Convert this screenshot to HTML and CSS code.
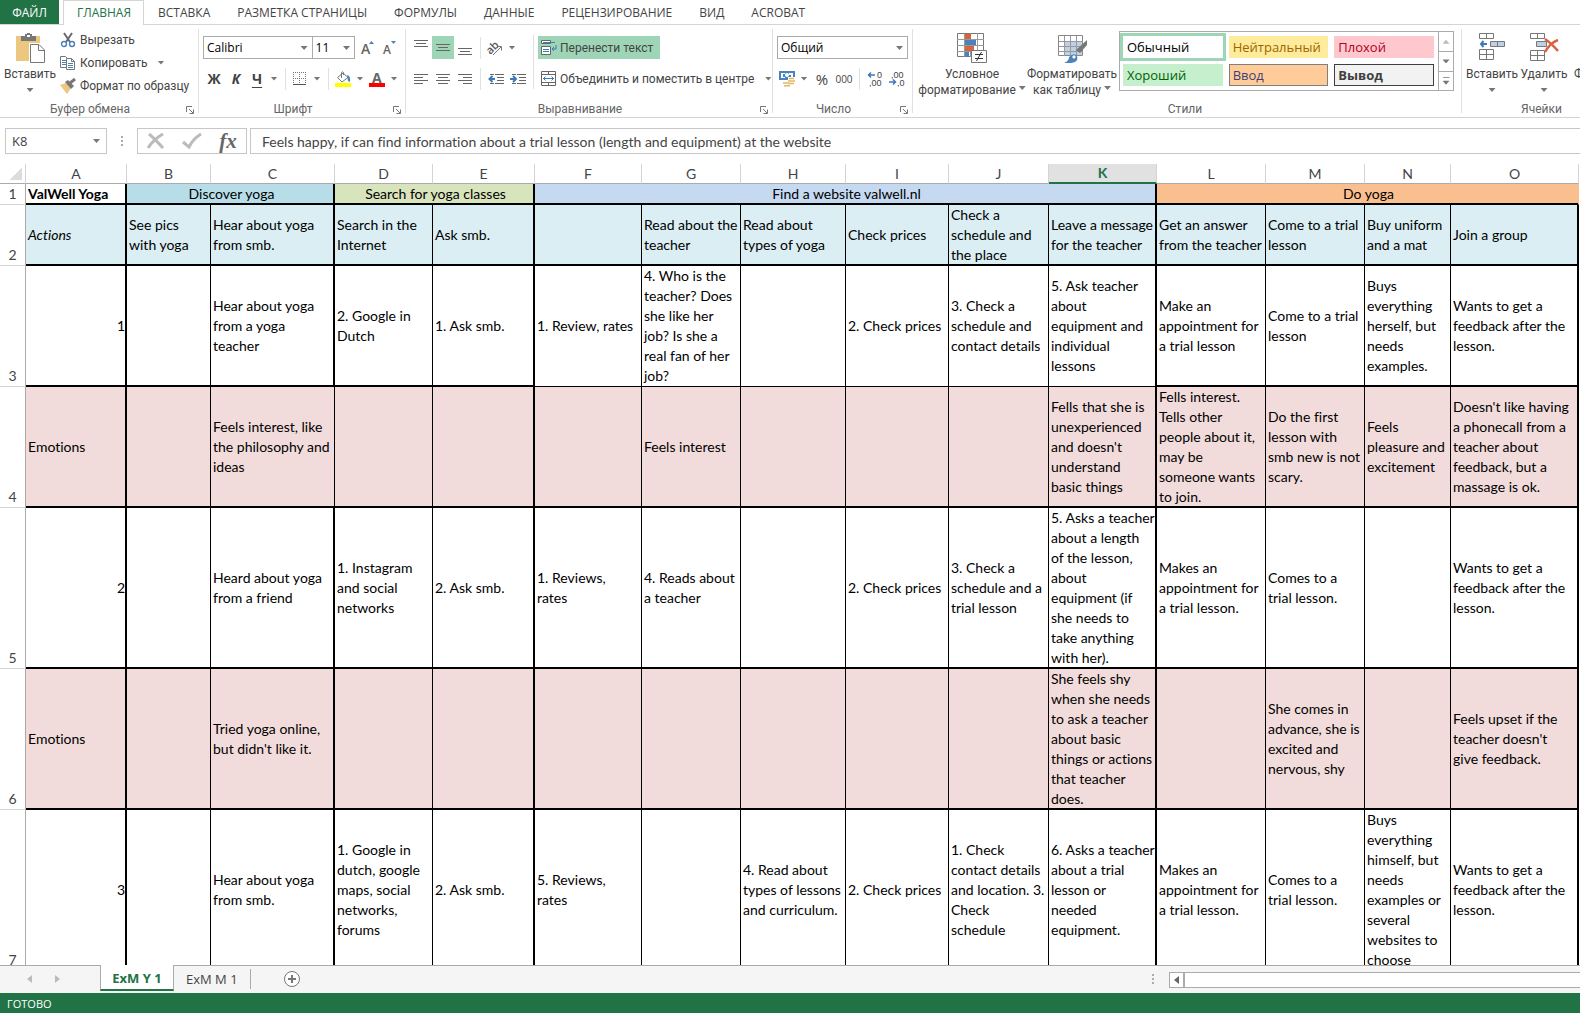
FILE: index.html
```html
<!DOCTYPE html>
<html lang="ru">
<head>
<meta charset="utf-8">
<title>ValWell Yoga - Excel</title>
<link rel="stylesheet" href="styles.css">
</head>
<body>
<nav class="tabs">
  <a class="tab tab-file" href="#file">ФАЙЛ</a>
  <a class="tab tab-active" href="#home">ГЛАВНАЯ</a>
  <a class="tab" href="#insert">ВСТАВКА</a>
  <a class="tab" href="#layout">РАЗМЕТКА СТРАНИЦЫ</a>
  <a class="tab" href="#formulas">ФОРМУЛЫ</a>
  <a class="tab" href="#data">ДАННЫЕ</a>
  <a class="tab" href="#review">РЕЦЕНЗИРОВАНИЕ</a>
  <a class="tab" href="#view">ВИД</a>
  <a class="tab" href="#acrobat">ACROBAT</a>
</nav>

<div class="ribbon">
  <section class="group group-clipboard">
    <div class="group-body">
      <button class="big big-paste" type="button">
        <svg width="30" height="30"><rect x="1" y="3" width="24" height="25" fill="#ebc77f"/><path d="M6 3h4V1h2V0h3v1h2v2h4v5H6z" fill="#777"/><rect x="12" y="2" width="3" height="2" fill="#fff"/><path d="M14 10h11l5 6v14H14z" fill="#fff"/><path d="M15.500 11.500h8.500l5.500 5.500v12.500h-14zM23.500 11.500v6h6" fill="#fff" stroke="#777"/></svg>
        <span>Вставить</span><i class="caret"></i>
      </button>
      <div class="clip-list">
        <button class="line-btn" type="button"><svg width="16" height="16"><path d="M4 1l6 9M12 1L6 10" stroke="#6a6a6a" stroke-width="2" fill="none"/><circle cx="4" cy="12" r="2.500" fill="none" stroke="#4a82bd" stroke-width="1.400"/><circle cx="12" cy="12" r="2.500" fill="none" stroke="#4a82bd" stroke-width="1.400"/></svg><span>Вырезать</span></button>
        <button class="line-btn" type="button"><svg width="16" height="16"><path d="M.5 1.500h5l3 3v8h-8z" fill="#fff" stroke="#777"/><path d="M2 5.500h4M2 7.500h4M2 9.500h4" stroke="#4a82bd"/><path d="M6.500 3.500h5l3 3v8h-8z" fill="#fff" stroke="#777"/><path d="M11.500 3.500v3h3" fill="none" stroke="#777"/><path d="M8 8.500h5M8 10.500h5M8 12.500h5" stroke="#4a82bd"/></svg><span>Копировать</span><i class="caret"></i></button>
        <button class="line-btn" type="button"><svg width="16" height="16"><path d="M0 7l6-2 5 5-4 6z" fill="#ebc77f"/><path d="M5 4l3-2 6 6-3 3z" fill="#777"/><path d="M10 5l5-4" stroke="#777" stroke-width="3"/></svg><span>Формат по образцу</span></button>
      </div>
    </div>
    <div class="group-title">Буфер обмена<svg class="launcher" width="8" height="8"><path d="M.5 6V.5H6M3 3l4 4M7.500 3.500v4h-4" fill="none" stroke="#777"/></svg></div>
  </section>

  <section class="group group-font">
    <div class="group-body rows">
      <div class="row">
        <label class="combo combo-font"><select aria-label="Шрифт"><option>Calibri</option></select></label>
        <label class="combo combo-size"><select aria-label="Размер шрифта"><option>11</option></select></label>
        <button class="tool grow" type="button" aria-label="Увеличить"><svg width="16" height="16"><text x="1" y="14" class="glyph-lg">A</text><path d="M9 4l2.500-3L14 4z" fill="#4a82bd"/></svg></button>
        <button class="tool" type="button" aria-label="Уменьшить"><svg width="16" height="16"><text x="1" y="14" class="glyph-sm">A</text><path d="M9 1l2.500 3L14 1z" fill="#4a82bd"/></svg></button>
      </div>
      <div class="row">
        <button class="tool bold" type="button">Ж</button>
        <button class="tool bold ital" type="button">К</button>
        <button class="tool tool-sm bold under" type="button">Ч</button>
        <button class="drop" type="button" aria-label="Подчеркивание"><i class="caret"></i></button>
        <span class="sep"></span>
        <button class="tool tool-sm" type="button" aria-label="Границы"><svg width="14" height="14"><path d="M.5 0v12M12.500 0v12M6.500 0v12M0 .5h13M0 6.500h13" stroke="#777" stroke-dasharray="1 1"/><path d="M0 12.500h13" stroke="#555"/></svg></button>
        <button class="drop" type="button" aria-label="Вид границ"><i class="caret"></i></button>
        <span class="sep"></span>
        <button class="tool tool-sm" type="button" aria-label="Заливка"><svg width="16" height="16"><path d="M2.500 6.500L8 2l5 4.500L7 11z" fill="#fff" stroke="#777"/><path d="M6.500 7V1.500Q7.500 0 8.500 1.500V4" fill="none" stroke="#777"/><path d="M12 4q4 1 3 7l-2-1z" fill="#4a82bd"/><path d="M0 12h16v4H0z" fill="#ff0"/></svg></button>
        <button class="drop" type="button" aria-label="Цвет заливки"><i class="caret"></i></button>
        <button class="tool tool-sm" type="button" aria-label="Цвет текста"><svg width="16" height="16"><text x="3" y="12" class="glyph-bold">A</text><path d="M0 12h16v4H0z" fill="#f00"/></svg></button>
        <button class="drop" type="button" aria-label="Выбор цвета"><i class="caret"></i></button>
      </div>
    </div>
    <div class="group-title">Шрифт<svg class="launcher" width="8" height="8"><path d="M.5 6V.5H6M3 3l4 4M7.500 3.500v4h-4" fill="none" stroke="#777"/></svg></div>
  </section>

  <section class="group group-align">
    <div class="group-body">
      <div class="rows">
        <div class="row">
          <button class="tool" type="button" aria-label="По верху"><svg width="14" height="16"><path d="M0 .5h14M2 3.500h10M0 6.500h14" stroke="#666"/></svg></button>
          <button class="tool on" type="button" aria-label="По центру"><svg width="14" height="16"><path d="M0 4.500h14M2 7.500h10M0 10.500h14" stroke="#666"/></svg></button>
          <button class="tool" type="button" aria-label="По низу"><svg width="14" height="16"><path d="M0 8.500h14M2 11.500h10M0 14.500h14" stroke="#666"/></svg></button>
          <span class="sep"></span>
          <button class="tool tool-sm" type="button" aria-label="Ориентация"><svg width="18" height="16"><text x="0" y="11" class="glyph-ab" transform="rotate(-45 7 8)">ab</text><path d="M7 15L15 7M11.500 6.500H15.500V10.500" fill="none" stroke="#777"/></svg></button>
          <button class="drop" type="button" aria-label="Наклон"><i class="caret"></i></button>
        </div>
        <div class="row">
          <button class="tool" type="button" aria-label="Влево"><svg width="14" height="12"><path d="M0 1.500h14M0 4.500h9M0 7.500h14M0 10.500h9" stroke="#666"/></svg></button>
          <button class="tool" type="button" aria-label="В центр"><svg width="14" height="12"><path d="M0 1.500h14M2 4.500h10M0 7.500h14M2 10.500h10" stroke="#666"/></svg></button>
          <button class="tool" type="button" aria-label="Вправо"><svg width="14" height="12"><path d="M0 1.500h14M5 4.500h9M0 7.500h14M5 10.500h9" stroke="#666"/></svg></button>
          <span class="sep"></span>
          <button class="tool" type="button" aria-label="Уменьшить отступ"><svg width="16" height="12"><path d="M2 1.500h4M7 1.500h9M9 4.500h7M9 7.500h7M2 10.500h4M7 10.500h9" stroke="#666"/><path d="M7 6H2M4.500 3L1.500 6l3 3" fill="none" stroke="#3f79b8" stroke-width="2"/></svg></button>
          <button class="tool" type="button" aria-label="Увеличить отступ"><svg width="16" height="12"><path d="M2 1.500h4M7 1.500h9M9 4.500h7M9 7.500h7M2 10.500h4M7 10.500h9" stroke="#666"/><path d="M0 6h5M3 3l3 3-3 3" fill="none" stroke="#3f79b8" stroke-width="2"/></svg></button>
        </div>
      </div>
      <span class="sep sep-tall"></span>
      <div class="rows">
        <div class="row"><button class="label-btn on" type="button"><svg width="16" height="15"><path d="M.5.500h9v3h-9zM.5 6.500h9v8h-9z" fill="#fff" stroke="#666"/><path d="M2 2.500h12M2 9.500h6M2 11.500h6" stroke="#3f79b8"/><path d="M15 5v4h-4M13 7l-2 2 2 2" fill="none" stroke="#3f79b8"/></svg><span>Перенести текст</span></button></div>
        <div class="row"><button class="label-btn" type="button"><svg width="16" height="15"><path d="M.5.500h14v14H.5zM.5 3.500h14M.5 11.500h14M7.500 0v3M7.500 12v3" fill="none" stroke="#666"/><path d="M2 7.500h11M4.500 5.500l-2 2 2 2M10.500 5.500l2 2-2 2" fill="none" stroke="#3f79b8"/></svg><span>Объединить и поместить в центре</span></button><button class="drop" type="button" aria-label="Варианты объединения"><i class="caret"></i></button></div>
      </div>
    </div>
    <div class="group-title">Выравнивание<svg class="launcher" width="8" height="8"><path d="M.5 6V.5H6M3 3l4 4M7.500 3.500v4h-4" fill="none" stroke="#777"/></svg></div>
  </section>

  <section class="group group-number">
    <div class="group-body rows">
      <div class="row"><label class="combo combo-number"><select aria-label="Формат"><option>Общий</option></select></label></div>
      <div class="row">
        <button class="tool tool-sm" type="button" aria-label="Денежный"><svg width="17" height="16"><path d="M0 0h16v9H0z" fill="#4a82bd"/><path d="M2 2h4v1H4v3h2v1H2zM10 2h4v4h-2V4h-2z" fill="#fff"/><circle cx="8" cy="4" r="2" fill="#fff"/><path d="M9 6h7v9H4v-4h5z" fill="#fff"/><path d="M10 7.500h5M9 10h7M4 12h6M9 12.500h6M5 14.800h6" stroke="#e3b662" stroke-width="1.600"/></svg></button>
        <button class="drop" type="button" aria-label="Валюта"><i class="caret"></i></button>
        <button class="tool percent" type="button">%</button>
        <button class="tool zeros" type="button">000</button>
        <span class="sep"></span>
        <button class="tool" type="button" aria-label="Больше знаков"><svg width="16" height="16"><text x="10" y="7" class="glyph-num">0</text><text x="2" y="15" class="glyph-num">,00</text><path d="M8 4H2M4 1.500L1.500 4 4 6.500" fill="none" stroke="#3f79b8" stroke-width="1.500"/></svg></button>
        <button class="tool" type="button" aria-label="Меньше знаков"><svg width="16" height="16"><text x="2" y="7" class="glyph-num">,00</text><text x="8" y="15" class="glyph-num">,0</text><path d="M0 11h6M4 8.500L6.500 11 4 13.500" fill="none" stroke="#3f79b8" stroke-width="1.500"/></svg></button>
      </div>
    </div>
    <div class="group-title">Число<svg class="launcher" width="8" height="8"><path d="M.5 6V.5H6M3 3l4 4M7.500 3.500v4h-4" fill="none" stroke="#777"/></svg></div>
  </section>

  <section class="group group-styles">
    <div class="group-body">
      <button class="big big-cond" type="button">
        <svg width="32" height="30"><path d="M1.500.500h26v23h-26z" fill="#fff" stroke="#777"/><path d="M8.500 0v24M14.500 0v24M21.500 0v24M1 6.500h27M1 12.500h27M1 18.500h27" stroke="#999"/><path d="M9 1h6v5H9zM9 13h9v5H9z" fill="#d9623f"/><path d="M9 7h11v5H9zM9 19h4v5H9z" fill="#4a82bd"/><path d="M15.500 17.500h15v12h-15z" fill="#fff" stroke="#777"/><path d="M19 21.500h8M19 25.500h8M25.500 19l-5 9" stroke="#333"/></svg>
        <span>Условное</span><span>форматирование<i class="caret"></i></span>
      </button>
      <button class="big big-table" type="button">
        <svg width="32" height="30"><path d="M2.500 2.500h24v20h-24z" fill="#fff" stroke="#888"/><path d="M9 9h17v13H9z" fill="#bdd0e6"/><path d="M8.500 3v20M14.500 3v20M20.500 3v20M3 8.500h24M3 13.500h24M3 18.500h24" stroke="#999"/><path d="M31 7v5l-7 8-4-3z" fill="#777"/><path d="M8 30q5-2 5-6 5-5 8-1 2 6-6 7z" fill="#4a82bd"/><path d="M16 24l2-2 2 2-2 2z" fill="#fff"/></svg>
        <span>Форматировать</span><span>как таблицу<i class="caret"></i></span>
      </button>
      <div class="gallery">
        <div class="gallery-items">
          <button class="style style-normal" type="button">Обычный</button>
          <button class="style style-neutral" type="button">Нейтральный</button>
          <button class="style style-bad" type="button">Плохой</button>
          <button class="style style-good" type="button">Хороший</button>
          <button class="style style-input" type="button">Ввод</button>
          <button class="style style-output" type="button">Вывод</button>
        </div>
        <div class="gallery-scroll">
          <button type="button" aria-label="Вверх"><i class="caret caret-up"></i></button>
          <button type="button" aria-label="Вниз"><i class="caret"></i></button>
          <button type="button" aria-label="Все стили"><i class="caret caret-more"></i></button>
        </div>
      </div>
    </div>
    <div class="group-title title-plain">Стили</div>
  </section>

  <section class="group group-cells">
    <div class="group-body">
      <button class="big big-cell" type="button">
        <svg width="28" height="30"><path d="M1.500.500h14v5h-14zM8.500.500v5M1.500 16.500h14v10h-14zM8.500 16.500v10M1.500 21.500h14" fill="#fff" stroke="#777"/><path d="M12.500 8.500h14v5h-14z" fill="#bdd0e6" stroke="#777"/><path d="M19.500 8.500v5" stroke="#777"/><path d="M9 11H3M5.500 8L3 11l2.500 3" fill="none" stroke="#3f79b8" stroke-width="2"/></svg>
        <span>Вставить</span><i class="caret"></i>
      </button>
      <button class="big big-cell" type="button">
        <svg width="30" height="30"><path d="M1.500.500h14v5h-14zM8.500.500v5M1.500 17.500h14v10h-14zM8.500 17.500v10M1.500 22.500h14" fill="#fff" stroke="#777"/><path d="M7.500 8.500h10v5h-10z" fill="#bdd0e6" stroke="#777"/><path d="M16 6q6 4 13 12M29 7q-8 3-13 12" fill="none" stroke="#d9623f" stroke-width="2.500"/></svg>
        <span>Удалить</span><i class="caret"></i>
      </button>
      <button class="big big-cell" type="button">
        <svg width="28" height="30"><path d="M.5 6.500h26v23H.5zM.5 14.500h26M.5 22.500h26M9.500 6v23" fill="#fff" stroke="#777"/><path d="M.5 0v4M.5 2h26" stroke="#3f79b8"/></svg>
        <span>Формат</span><i class="caret"></i>
      </button>
    </div>
    <div class="group-title title-plain">Ячейки</div>
  </section>
</div>

<div class="formula-bar">
  <label class="combo name-box"><input type="text" value="K8" aria-label="Имя"></label>
  <span class="dots"></span>
  <div class="fx-box">
    <button type="button" aria-label="Отмена"><svg width="18" height="16"><path d="M2 1q5 4 14 14M16 1Q7 6 1 15" fill="none" stroke="#bbb" stroke-width="3"/></svg></button>
    <button type="button" aria-label="Ввод"><svg width="20" height="16"><path d="M1 9l6 5Q11 6 19 1" fill="none" stroke="#bbb" stroke-width="3"/></svg></button>
    <button class="fx" type="button">fx</button>
  </div>
  <input class="formula" type="text" aria-label="Строка формул" value="Feels happy, if can find information about a trial lesson (length and equipment) at the website">
</div>

<main class="sheet">
<table class="grid">
  <colgroup><col class="w-head"><col class="w-a"><col class="w-b"><col class="w-c"><col class="w-d"><col class="w-e"><col class="w-f"><col class="w-g"><col class="w-h"><col class="w-i"><col class="w-j"><col class="w-k"><col class="w-l"><col class="w-m"><col class="w-n"><col class="w-o"></colgroup>
  <thead>
    <tr><th class="corner"></th><th>A</th><th>B</th><th>C</th><th>D</th><th>E</th><th>F</th><th>G</th><th>H</th><th>I</th><th>J</th><th class="current">K</th><th>L</th><th>M</th><th>N</th><th>O</th></tr>
  </thead>
  <tbody>
    <tr class="r1"><th>1</th><td class="t bold">ValWell Yoga</td><td class="t discover" colspan="2">Discover yoga</td><td class="t search" colspan="2">Search for yoga classes</td><td class="t find" colspan="6">Find a website valwell.nl</td><td class="do" colspan="4">Do yoga</td></tr>
    <tr class="r2"><th>2</th><td class="t ital">Actions</td><td>See pics<br>with yoga</td><td class="t">Hear about yoga<br>from smb.</td><td>Search in the<br>Internet</td><td class="t">Ask smb.</td><td></td><td>Read about the<br>teacher</td><td>Read about<br>types of yoga</td><td>Check prices</td><td>Check a<br>schedule and<br>the place</td><td class="t">Leave a message<br>for the teacher</td><td>Get an answer<br>from the teacher</td><td>Come to a trial<br>lesson</td><td>Buy uniform<br>and a mat</td><td class="t">Join a group</td></tr>
    <tr class="r3"><th>3</th><td class="t num">1</td><td></td><td class="t">Hear about yoga<br>from a yoga<br>teacher</td><td>2. Google in<br>Dutch</td><td class="t">1. Ask smb.</td><td class="thin">1. Review, rates</td><td class="thin">4. Who is the<br>teacher? Does<br>she like her<br>job? Is she a<br>real fan of her<br>job?</td><td class="thin"></td><td class="thin">2. Check prices</td><td class="thin">3. Check a<br>schedule and<br>contact details</td><td class="t thin">5. Ask teacher<br>about<br>equipment and<br>individual<br>lessons</td><td>Make an<br>appointment for<br>a trial lesson</td><td>Come to a trial<br>lesson</td><td>Buys<br>everything<br>herself, but<br>needs<br>examples.</td><td class="t">Wants to get a<br>feedback after the<br>lesson.</td></tr>
    <tr class="r4 pink"><th>4</th><td class="t">Emotions</td><td></td><td>Feels interest, like<br>the philosophy and<br>ideas</td><td></td><td class="t"></td><td></td><td>Feels interest</td><td></td><td></td><td></td><td class="t">Fells that she is<br>unexperienced<br>and doesn't<br>understand<br>basic things</td><td>Fells interest.<br>Tells other<br>people about it,<br>may be<br>someone wants<br>to join.</td><td>Do the first<br>lesson with<br>smb new is not<br>scary.</td><td>Feels<br>pleasure and<br>excitement</td><td class="t">Doesn't like having<br>a phonecall from a<br>teacher about<br>feedback, but a<br>massage is ok.</td></tr>
    <tr class="r5"><th>5</th><td class="t num">2</td><td></td><td class="t">Heard about yoga<br>from a friend</td><td>1. Instagram<br>and social<br>networks</td><td class="t">2. Ask smb.</td><td>1. Reviews,<br>rates</td><td>4. Reads about<br>a teacher</td><td></td><td>2. Check prices</td><td>3. Check a<br>schedule and a<br>trial lesson</td><td class="t">5. Asks a teacher<br>about a length<br>of the lesson,<br>about<br>equipment (if<br>she needs to<br>take anything<br>with her).</td><td>Makes an<br>appointment for<br>a trial lesson.</td><td>Comes to a<br>trial lesson.</td><td></td><td class="t">Wants to get a<br>feedback after the<br>lesson.</td></tr>
    <tr class="r6 pink"><th>6</th><td class="t">Emotions</td><td></td><td class="t">Tried yoga online,<br>but didn't like it.</td><td></td><td class="t"></td><td></td><td></td><td></td><td></td><td></td><td class="t">She feels shy<br>when she needs<br>to ask a teacher<br>about basic<br>things or actions<br>that teacher<br>does.</td><td></td><td>She comes in<br>advance, she is<br>excited and<br>nervous, shy</td><td></td><td class="t">Feels upset if the<br>teacher doesn't<br>give feedback.</td></tr>
    <tr class="r7"><th>7</th><td class="t num">3</td><td></td><td class="t">Hear about yoga<br>from smb.</td><td>1. Google in<br>dutch, google<br>maps, social<br>networks,<br>forums</td><td class="t">2. Ask smb.</td><td>5. Reviews,<br>rates</td><td></td><td>4. Read about<br>types of lessons<br>and curriculum.</td><td>2. Check prices</td><td>1. Check<br>contact details<br>and location. 3.<br>Check<br>schedule</td><td class="t">6. Asks a teacher<br>about a trial<br>lesson or<br>needed<br>equipment.</td><td>Makes an<br>appointment for<br>a trial lesson.</td><td>Comes to a<br>trial lesson.</td><td>Buys<br>everything<br>himself, but<br>needs<br>examples or<br>several<br>websites to<br>choose</td><td class="t">Wants to get a<br>feedback after the<br>lesson.</td></tr>
  </tbody>
</table>
</main>

<div class="sheet-tabs">
  <div class="sheet-nav"><button type="button" aria-label="Назад"><svg width="5" height="8"><path d="M5 0v8L0 4z" fill="#bbb"/></svg></button><button type="button" aria-label="Вперед"><svg width="5" height="8"><path d="M0 0v8l5-4z" fill="#bbb"/></svg></button></div>
  <button class="sheet-tab sheet-active" type="button">ExM Y 1</button>
  <button class="sheet-tab" type="button">ExM M 1</button>
  <span class="sep"></span>
  <button class="add" type="button" aria-label="Новый лист"><svg width="16" height="16"><circle cx="8" cy="8" r="7.500" fill="#fff" stroke="#777"/><path d="M8 4v8M4 8h8" stroke="#777" stroke-width="2"/></svg></button>
  <span class="dots"></span>
  <div class="scrollbar"><button type="button" aria-label="Прокрутка влево"><svg width="5" height="8"><path d="M5 0v8L0 4z" fill="#666"/></svg></button></div>
</div>
<footer class="status">ГОТОВО</footer>
</body>
</html>
```
FILE: styles.css
```css
* { box-sizing: border-box; }
html, body { height: 100%; }
body {
  margin: 0;
  display: flex;
  flex-direction: column;
  overflow: hidden;
  background: #fff;
  color: #444;
  font: 12px/16px "Open Sans", "Noto Sans", sans-serif;
}
button, input, select { font: inherit; color: inherit; }
button { border: 0; padding: 0; margin: 0; background: none; white-space: nowrap; }
svg { display: block; flex: none; }
.bold { font-weight: 700; }
.ital { font-style: italic; }

/* small triangle used by every drop-down */
.caret { display: inline-block; flex: none; width: 7px; height: 4px; background: #777; clip-path: polygon(0 0, 100% 0, 50% 100%); }
.caret-up { clip-path: polygon(50% 0, 100% 100%, 0 100%); background: #bbb; }
.caret-more { height: 8px; clip-path: polygon(0 0, 100% 0, 100% 1px, 0 1px, 0 4px, 100% 4px, 50% 100%, 0 4px); }

/* tabs */
.tabs { display: flex; flex: none; height: 25px; border-bottom: 1px solid #d4d4d4; }
.tab { padding: 5px 13px 0 14px; color: #444; text-decoration: none; white-space: nowrap; }
.tab-file { width: 59px; padding: 5px 0 0; text-align: center; background: #217346; color: #fff; margin-right: 4px; }
.tab-active { height: 25px; padding: 4px 12px 0 13px; background: #fff; color: #217346; border: 1px solid #d4d4d4; border-bottom: 0; }

/* ribbon */
.ribbon { display: flex; flex: none; height: 93px; padding-top: 4px; overflow: hidden; border-bottom: 1px solid #d4d4d4; font-family: "Roboto", sans-serif; }
.group { flex: none; display: flex; flex-direction: column; height: 84px; padding: 0 4px; border-right: 1px solid #e1e1e1; }
.group-clipboard { width: 199px; }
.group-font { width: 207px; }
.group-align { width: 367px; }
.group-number { width: 140px; }
.group-styles { width: 549px; padding: 0 7px 0 3px; }
.group-cells { width: 160px; }
.group-body { flex: 1; display: flex; }
.group-title { position: relative; height: 16px; margin-bottom: -4px; padding-right: 18px; text-align: center; color: #666; line-height: 16px; }
.title-plain { padding-right: 0; }
.launcher { position: absolute; right: 0; top: 5px; }
.rows { display: flex; flex-direction: column; gap: 8px; padding-top: 7px; }
.row { display: flex; align-items: center; height: 23px; }
.tool { flex: none; display: flex; align-items: center; justify-content: center; width: 22px; height: 23px; font: 14px "Open Sans", sans-serif; }
.tool.bold { font-weight: 700; }
.tool.ital { font-style: italic; }
.tool-sm { width: 20px; }
.grow { margin-left: 2px; }
.drop { flex: none; width: 14px; height: 23px; display: flex; align-items: center; justify-content: center; }
.on { background: #9fd5b7; }
.under { text-decoration: underline; text-underline-offset: 3px; }
.percent { font-size: 15px; }
.zeros { font-size: 10px; }
.sep { flex: none; width: 1px; height: 22px; margin: 0 4px; background: #e1e1e1; }
.sep-tall { height: 54px; margin: 6px 4px 0; }
.glyph-lg { font: 600 14px "Open Sans", sans-serif; fill: #666; }
.glyph-sm { font: 600 12px "Open Sans", sans-serif; fill: #666; }
.glyph-bold { font: 700 14px "Open Sans", sans-serif; fill: #666; }
.glyph-ab { font: 600 11px "Open Sans", sans-serif; fill: #555; }
.glyph-num { font: 9px "Liberation Sans", sans-serif; fill: #444; }

.combo { position: relative; display: block; height: 23px; border: 1px solid #ababab; background: #fff; color: #000; font-family: "Open Sans", sans-serif; }
.combo::after { content: ""; position: absolute; right: 4px; top: 9px; width: 7px; height: 4px; background: #777; clip-path: polygon(0 0, 100% 0, 50% 100%); pointer-events: none; }
.combo select, .combo input { display: block; width: 100%; height: 100%; padding: 0 0 0 3px; border: 0; background: none; appearance: none; outline: 0; }
.combo-font { width: 111px; }
.combo-size { width: 44px; margin-left: -1px; }
.combo-number { width: 131px; }

.big { flex: none; display: flex; flex-direction: column; align-items: center; padding-top: 4px; }
.big svg { margin-bottom: 3px; }
.big > .caret { margin-top: 6px; }
.big span .caret { margin: 0 0 4px 3px; }
.big-paste { width: 52px; }
.big-cond { width: 112px; }
.big-table { width: 88px; }
.big-cell { width: 52px; }
.clip-list { display: flex; flex-direction: column; margin-top: -1px; }
.line-btn { display: flex; align-items: center; gap: 4px; height: 23px; padding-left: 4px; }
.line-btn .caret { margin-left: 6px; }
.label-btn { display: flex; align-items: center; gap: 3px; height: 23px; padding: 0 7px 0 3px; }

.gallery { display: flex; flex: 1; height: 60px; margin: 2px 0 0 3px; border: 1px solid #ababab; }
.gallery-items { flex: 1; display: grid; grid-template-columns: repeat(3, 1fr); grid-auto-rows: 22px; gap: 6px; padding: 4px 4px 0 3px; }
.style { padding-left: 4px; text-align: left; font: 13px/20px "Open Sans", sans-serif; }
.style-normal { color: #000; outline: 3px solid #9fd5b7; }
.style-neutral { background: #ffeb9c; color: #9c6500; }
.style-bad { background: #ffc7ce; color: #b0001a; }
.style-good { background: #c6efce; color: #006100; }
.style-input { background: #ffcc99; color: #3f3f76; border: 1px solid #7f7f7f; padding-left: 3px; }
.style-output { background: #f2f2f2; color: #3f3f3f; border: 1px solid #3f3f3f; font-weight: 700; padding-left: 3px; }
.gallery-scroll { width: 15px; display: grid; grid-template-rows: 1fr 1fr 1fr; border-left: 1px solid #ababab; }
.gallery-scroll button { display: flex; align-items: center; justify-content: center; }
.gallery-scroll button + button { border-top: 1px solid #ababab; }

/* formula bar */
.formula-bar { flex: none; display: flex; height: 46px; padding: 10px 0 10px 5px; }
.formula-bar .combo { width: 102px; height: 26px; border-color: #c6c6c6; color: #444; font-size: 13px; }
.formula-bar .combo::after { right: 6px; top: 10px; }
.formula-bar .combo input { padding-left: 6px; }
.dots { flex: none; width: 2px; height: 10px; background: repeating-linear-gradient(#ababab 0 2px, transparent 2px 4px); }
.formula-bar .dots { margin: 8px 15px 0 14px; }
.fx-box { display: flex; align-items: center; width: 110px; border: 1px solid #c6c6c6; margin: 0 3px 0 -1px; }
.fx-box button { flex: 1; display: flex; justify-content: center; }
.fx { font: italic 700 21px/22px "Liberation Serif", serif; color: #666; }
.formula { flex: 1; min-width: 0; padding: 0 11px; border: 1px solid #c6c6c6; border-right: 0; font: 14px "Lato", sans-serif; font-variant-ligatures: none; outline: 0; }

/* sheet */
.sheet { flex: 1; min-height: 0; overflow: hidden; }
.grid { table-layout: fixed; width: 1579px; border-collapse: separate; border-spacing: 0; font: 14px/20px "Lato", sans-serif; font-variant-ligatures: none; color: #000; }
.w-head { width: 26px; } .w-a { width: 101px; } .w-b { width: 84px; } .w-c { width: 124px; }
.w-d { width: 98px; } .w-e { width: 102px; } .w-f { width: 107px; } .w-g { width: 99px; }
.w-h { width: 105px; } .w-i { width: 103px; } .w-j { width: 100px; } .w-k { width: 108px; }
.w-l { width: 109px; } .w-m { width: 99px; } .w-n { width: 86px; } .w-o { width: 128px; }
.grid th { padding: 0; font-weight: 400; color: #444; }
.grid thead th { height: 20px; line-height: 18px; border-bottom: 1px solid #ababab; border-right: 1px solid #d4d4d4; }
.grid thead .corner { background: linear-gradient(135deg, transparent 50%, #dcdcdc 50%) 10px 4px / 12px 12px no-repeat; }
.grid thead .current { background: #e1e1e1; color: #217346; font-weight: 700; border-bottom: 2px solid #217346; }
.grid tbody th { vertical-align: bottom; border-right: 1px solid #ababab; border-bottom: 1px solid #d4d4d4; }
/* a thick edge is the 1px border plus a 1px inset shadow, so it takes no room from the text */
.grid td { padding: 0 0 0 2px; white-space: nowrap; vertical-align: middle; border-right: 1px solid #000; border-bottom: 1px solid #000; box-shadow: inset 0 -1px #000; }
.grid td.t { box-shadow: inset -1px -1px #000; }
.grid td.thin { box-shadow: none; }
.grid td.t.thin { box-shadow: inset -1px 0 #000; }
.grid td.num { text-align: right; padding-right: 1px; }
.r1 { height: 21px; } .r2 { height: 61px; } .r3, .r4 { height: 121px; } .r5, .r7 { height: 161px; } .r6 { height: 141px; }
.r1 td[colspan] { text-align: center; }
.discover { background: #b7dee8; } .search { background: #d8e4bc; } .find { background: #c5d9f1; } .do { background: #fabf8f; }
.grid td.do { border-right-color: #fabf8f; }
.r2 td { background: #daeef3; }
.pink td { background: #f2dcdb; }

/* sheet tabs and status bar */
.sheet-tabs { flex: none; display: flex; align-items: flex-start; height: 28px; border-top: 1px solid #ababab; background: #f5f5f5; }
.sheet-nav { display: flex; gap: 23px; width: 100px; padding: 9px 0 0 27px; }
.sheet-tab { height: 26px; padding: 0 12px; font-size: 13px; }
.sheet-active { width: 74px; padding: 2px 0 0; margin-top: -1px; height: 26px; background: #fff; color: #217346; font-weight: 700; border: 1px solid #ababab; border-top: 0; border-bottom: 2px solid #217346; }
.sheet-tabs .sep { height: 20px; margin: 3px 0 0; background: #ababab; }
.add { margin: 5px 0 0 33px; }
.sheet-tabs .dots { margin: 8px 15px 0 auto; }
.scrollbar { width: 26%; height: 16px; margin-top: 6px; border: 1px solid #ababab; border-right: 0; background: #fff; }
.scrollbar button { display: flex; align-items: center; justify-content: center; width: 15px; height: 14px; border-right: 2px solid #ababab; }
.status { flex: none; height: 20px; padding-left: 7px; background: #217346; color: #fff; font-size: 11px; line-height: 21px; }
```
